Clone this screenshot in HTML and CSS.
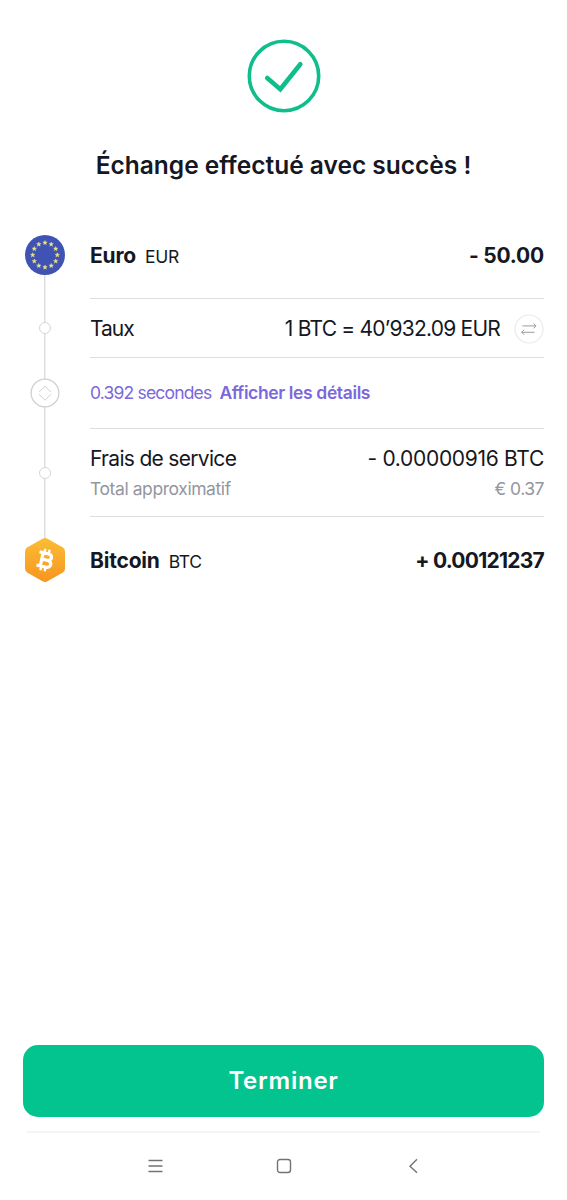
FILE: index.html
```html
<!DOCTYPE html>
<html lang="fr">
<head>
<meta charset="utf-8">
<title>Échange effectué</title>
<link rel="stylesheet" href="styles.css">
</head>
<body>
<main class="screen">
  <svg class="success" viewBox="0 0 74 74"><circle cx="37" cy="37" r="34.7"/><path d="M20.2 39 33.3 50.2 53.3 25.300"/></svg>
  <h1 class="title">Échange effectué avec succès !</h1>

  <section class="steps">
    <div class="step step-from">
      <div class="rail rail-first">
        <svg class="coin" viewBox="0 0 40 40"><defs><path id="star" fill="#efe980" d="M0-2.3.6-.8 2.2-.7.9.3 1.4 1.9 0 1-1.4 1.9-.9.3-2.2-.7-.6-.8Z" stroke="#efe980" stroke-width=".4"/></defs><circle cx="20" cy="20" r="20" fill="#4053b5"/>
          <use href="#star" x="20" y="7.7"/><use href="#star" x="26.2" y="9.3"/><use href="#star" x="30.7" y="13.8"/><use href="#star" x="32.3" y="20"/><use href="#star" x="30.7" y="26.2"/><use href="#star" x="26.2" y="30.7"/><use href="#star" x="20" y="32.3"/><use href="#star" x="13.8" y="30.7"/><use href="#star" x="9.3" y="26.2"/><use href="#star" x="7.7" y="20"/><use href="#star" x="9.3" y="13.8"/><use href="#star" x="13.8" y="9.3"/></svg>
      </div>
      <div class="row"><span class="name">Euro</span><span class="code">EUR</span><span class="amount">- 50.00</span></div>
    </div>

    <div class="step step-rate">
      <div class="rail"><i class="dot"></i></div>
      <div class="row"><span class="label taux">Taux</span><span class="value rate">1 BTC = 40’932.09 EUR</span>
        <svg class="swap" viewBox="0 0 30 30"><circle cx="15" cy="15" r="14"/><path d="M8.300 11.900H22M19.500 9.400 22 11.900 19.500 14.400M20.500 18.300H7.700M10.200 15.800 7.700 18.300 10.200 20.800"/></svg>
      </div>
    </div>

    <div class="step step-time">
      <div class="rail"><svg class="expand" viewBox="0 0 30 30"><circle cx="15" cy="15" r="13.900"/><path d="M9 14.200 15 8.200 21 14.200M9 16.200 15 22.200 21 16.200"/></svg></div>
      <div class="row"><span class="elapsed">0.392 secondes</span><a class="details">Afficher les détails</a></div>
    </div>

    <div class="step step-fee">
      <div class="rail"><i class="dot"></i></div>
      <div class="row stack">
        <div class="line"><span class="label frais">Frais de service</span><span class="value fee">- 0.00000916 BTC</span></div>
        <div class="line sub"><span class="total">Total approximatif</span><span class="value approx">€ 0.37</span></div>
      </div>
    </div>

    <div class="step step-to">
      <div class="rail rail-last">
        <svg class="hex" viewBox="0 0 40 44"><defs><linearGradient id="gold" x1="0" y1="0" x2="0" y2="1"><stop offset="0" stop-color="#fbbd35"/><stop offset="1" stop-color="#f79520"/></linearGradient></defs>
          <path fill="url(#gold)" d="M17.500.7Q20-.7 22.500.7L37.500 9.300Q40 10.800 40 13.500V30.500Q40 33.200 37.500 34.700L22.500 43.300Q20 44.700 17.500 43.300L2.500 34.700Q0 33.200 0 30.500V13.500Q0 10.800 2.500 9.300Z"/>
          <g transform="translate(20 22) rotate(13)" fill="none" stroke="#fff"><path stroke-width="3.300" stroke-linejoin="round" d="M-7.200-6.800H2C7-6.800 7-.2 2-.2H-3.500M2-.2C8.200-.2 8.200 6.800 2 6.800H-7.200M-3.300-6.800V6.800"/><path stroke-width="2.400" d="M-2.200-11V-7M2.200-11V-7M-2.200 7V11M2.200 7V11"/></g></svg>
      </div>
      <div class="row"><span class="name bitcoin">Bitcoin</span><span class="code btc">BTC</span><span class="amount received">+ 0.00121237</span></div>
    </div>
  </section>

  <button class="done">Terminer</button>
  <nav class="system">
    <svg viewBox="0 0 16 16"><path d="M1.500 2.500H15.500M1.500 8H15.500M1.500 13.500H15.500"/></svg>
    <svg viewBox="0 0 16 16"><rect x="1.500" y="1.500" width="13" height="13" rx="2.500"/></svg>
    <svg viewBox="0 0 16 16"><path d="M12 1.200 5 8.200 12 14.800"/></svg>
  </nav>
</main>
</body>
</html>
```
FILE: styles.css
```css
* { box-sizing: border-box; }
body { margin: 0; background: #fff; color: #151722; font-family: Inter, "Liberation Sans", sans-serif; }
.screen { width: 567px; height: 1200px; padding: 39px 23px 0; display: flex; flex-direction: column; }
.success { width: 74px; height: 74px; align-self: center; fill: none; stroke: #0fbe8b; stroke-width: 3.6; stroke-linecap: round; }
.success path { stroke-width: 4.6; }
.title { margin: 36px 0 0; height: 32px; line-height: 33px; font-size: 24.500px; font-weight: 600; text-align: center; white-space: nowrap; }
.steps { margin-top: 31px; }
.step { display: grid; grid-template-columns: 44px 1fr; column-gap: 23px; }
.step-from { height: 87px; }
.step-rate { height: 59px; }
.step-time { height: 71px; }
.step-fee { height: 88px; }
.step-to { height: 86px; }
.rail { display: grid; place-items: center; padding-bottom: 1px; background: linear-gradient(#dcdfe2, #dcdfe2) 21px 0 / 1.500px 100% no-repeat; }
.rail-first { background-position: 21px 100%; background-size: 1.500px 50%; }
.rail-last { padding: 0; background-size: 1.500px 50%; }
.coin { width: 40px; height: 40px; }
.hex { width: 40px; height: 44px; }
.dot { width: 12px; height: 12px; border: 1.500px solid #d3d6da; border-radius: 50%; background: #fff; }
.expand { width: 30px; height: 30px; fill: none; stroke: #ccd1d3; stroke-width: 1.300; }
.expand circle { fill: #fff; }
.expand path { stroke-width: 1; }
.row { display: flex; align-items: center; border-bottom: 1px solid #dcdee1; white-space: nowrap; font-size: 21px; line-height: 28px; }
.step-rate .row { padding-top: 1px; }
.step-to .row { border-bottom: 0; }
.step-from .row, .step-to .row { align-items: baseline; padding-top: 30px; }
.name, .amount { font-weight: 650; letter-spacing: -.2px; }
.code { font-size: 17.500px; margin-left: 9px; letter-spacing: -.3px; }
.amount, .value { margin-left: auto; }
.received { letter-spacing: -.75px; }
.taux { letter-spacing: -1px; }
.rate { letter-spacing: -.78px; }
.fee { letter-spacing: -.3px; }
.frais { letter-spacing: -.69px; }
.total { letter-spacing: -.42px; }
.approx { letter-spacing: -.5px; }
.swap { width: 30px; height: 30px; margin-left: 14px; fill: none; stroke: #8f9296; stroke-width: .9; }
.swap circle { stroke: #e9eaec; stroke-width: 1.200; }
.elapsed, .details { font-size: 17.500px; color: #7a68dc; }
.elapsed { letter-spacing: -.82px; }
.details { margin-left: 8px; font-weight: 600; letter-spacing: -.37px; }
.stack { flex-direction: column; align-items: stretch; justify-content: center; padding-top: 2px; }
.line { display: flex; line-height: 30px; }
.sub { font-size: 17.500px; color: #9296a0; }
.done { margin: 442px 0 0; height: 72px; border: 0; border-radius: 15px; background: #03c48f; color: #fff; font: 600 24px/32px Inter, sans-serif; letter-spacing: .75px; }
.system { margin: 14px 4px 0; border-top: 2px solid #f4f4f5; padding-top: 25px; display: grid; grid-template-columns: repeat(3, 129px); justify-content: center; justify-items: center; }
.system svg { width: 16px; height: 16px; fill: none; stroke: #737373; stroke-width: 1.400; }
```
